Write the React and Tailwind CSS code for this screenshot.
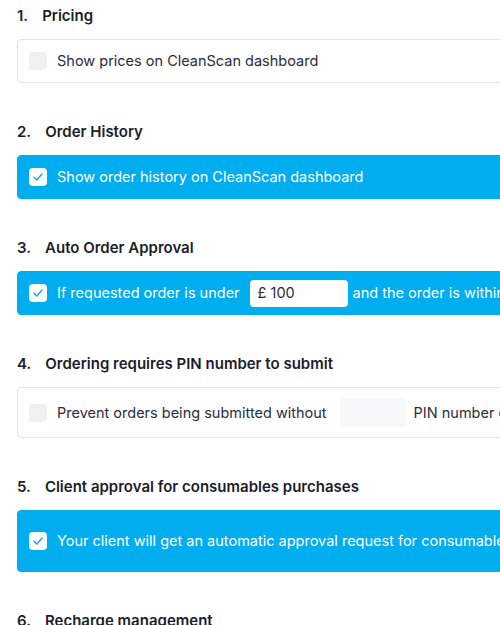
import React from 'react';

function Check({ checked }) {
    if (!checked) {
        return <div className="w-[18px] h-[18px] shrink-0 rounded-[4px] bg-[#eef0f3]" />;
    }
    return (
        <div className="w-[18px] h-[18px] shrink-0 rounded-[4px] bg-white flex items-center justify-center">
            <svg width="12" height="12" viewBox="0 0 12 12" fill="none">
                <path d="M2 6.3 L4.8 9 L10 3" stroke="#1aa7e8" strokeWidth="1.4" strokeLinecap="round" strokeLinejoin="round" />
            </svg>
        </div>
    );
}

function Heading({ num, title }) {
    return (
        <div className="flex items-center gap-[14px] h-5 text-[15px] font-semibold text-[#1b1d2b]">
            <span>{num}.</span>
            <span>{title}</span>
        </div>
    );
}

function Section({ num, title, checked, height = 'h-[44px]', children }) {
    return (
        <div className="mb-[39px]">
            <Heading num={num} title={title} />
            <div
                className={`mt-[13px] ${height} flex items-center gap-[10px] pl-[11px] rounded-[4px] border whitespace-nowrap text-[14.5px] ${
                    checked
                        ? 'bg-[#00adef] border-[#00adef] text-white'
                        : 'bg-white border-[#e3e4e8] text-[#2a2c3a]'
                }`}
            >
                <Check checked={checked} />
                {children}
            </div>
        </div>
    );
}

export default function App() {
    return (
        <div className="w-[500px] h-[625px] overflow-hidden bg-white" style={{ fontFamily: 'Inter, "Noto Sans", sans-serif' }}>
            <div className="w-[800px] pl-[17px] pt-[6px]">
                <Section num="1" title="Pricing">
                    <span>Show prices on CleanScan dashboard</span>
                </Section>
                <Section num="2" title="Order History" checked>
                    <span>Show order history on CleanScan dashboard</span>
                </Section>
                <Section num="3" title="Auto Order Approval" checked>
                    <span>If requested order is under</span>
                    <div className="w-[98px] h-[27px] bg-white rounded-[4px] flex items-center pl-2 text-[#2a2c3a]">£ 100</div>
                    <span className="-ml-[5px]">and the order is within the monthly budget</span>
                </Section>
                <Section num="4" title="Ordering requires PIN number to submit" height="h-[51px]">
                    <span>Prevent orders being submitted without</span>
                    <div className="ml-[3px] w-[66px] h-[29px] bg-[#f7f8fa] rounded-[4px]" />
                    <span className="-ml-[2px]">PIN number entered</span>
                </Section>
                <Section num="5" title="Client approval for consumables purchases" checked height="h-[62px]">
                    <span>Your client will get an automatic approval request for consumables purchases</span>
                </Section>
                <Heading num="6" title="Recharge management" />
            </div>
        </div>
    );
}
